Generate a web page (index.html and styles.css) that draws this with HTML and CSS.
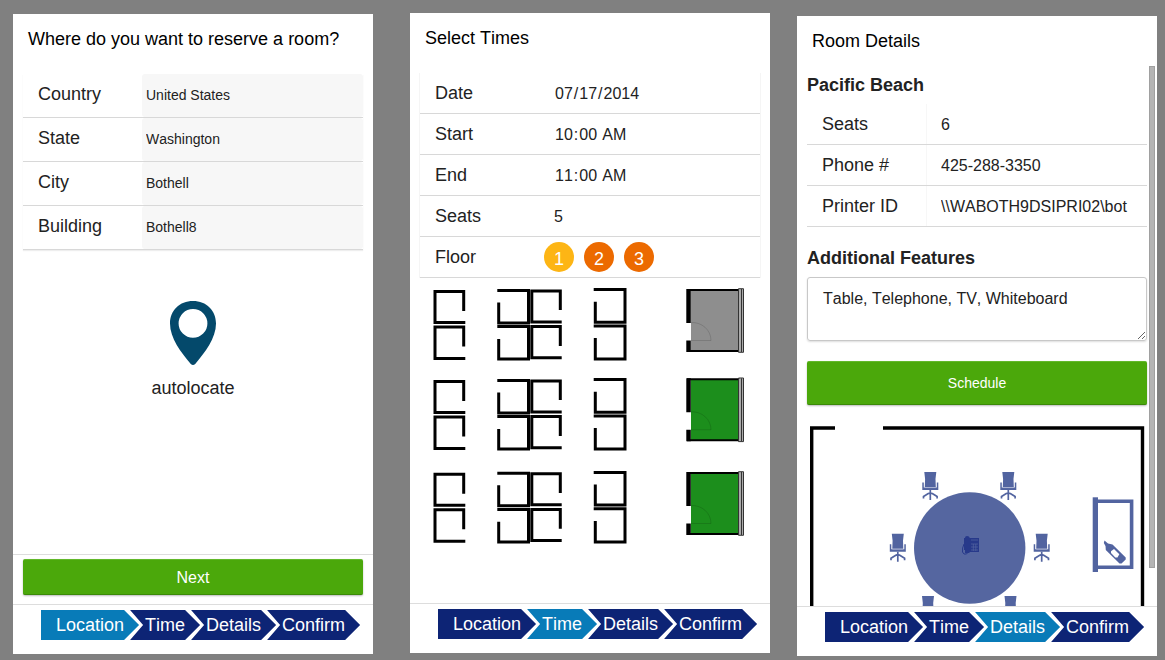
FILE: index.html
```html
<!DOCTYPE html>
<html lang="en-US">
<head>
<meta charset="utf-8">
<title>Reserve a room</title>
<link rel="stylesheet" href="styles.css">
</head>
<body>
<main class="screens">

<section class="phone phone-location">
  <h1 class="title">Where do you want to reserve a room?</h1>
  <div class="content">
    <form class="fields tall">
      <div class="row"><label for="country">Country</label><select id="country"><option>United States</option></select></div>
      <div class="row"><label for="state">State</label><select id="state"><option>Washington</option></select></div>
      <div class="row"><label for="city">City</label><select id="city"><option>Bothell</option></select></div>
      <div class="row"><label for="building">Building</label><select id="building"><option>Bothell8</option></select></div>
    </form>
    <button class="locate" type="button">
      <svg width="46" height="64" viewBox="0 0 46 64" aria-hidden="true">
        <path fill="#04496b" fill-rule="evenodd" d="M23 0C9.500 0 0 9.500 0 22.500C0 37 11 51.500 20.800 63Q23 65 25.200 63C35 51.500 46 37 46 22.500C46 9.500 36.500 0 23 0ZM23 8A14.400 14.400 0 1 1 23 36.800A14.400 14.400 0 1 1 23 8Z"/>
      </svg>
      autolocate
    </button>
  </div>
  <div class="actions"><button class="primary next" type="button">Next</button></div>
  <nav class="steps">
    <a class="step first active" href="#location">Location</a>
    <a class="step" href="#time">Time</a>
    <a class="step" href="#details">Details</a>
    <a class="step" href="#confirm">Confirm</a>
  </nav>
</section>

<section class="phone phone-time">
  <h1 class="title">Select Times</h1>
  <div class="content">
    <form class="fields">
      <div class="row"><label for="date">Date</label><input id="date" type="date" value="2014-07-17"></div>
      <div class="row"><label for="start">Start</label><input id="start" type="time" value="10:00"></div>
      <div class="row"><label for="end">End</label><input id="end" type="time" value="11:00"></div>
      <div class="row"><label for="seats">Seats</label><input id="seats" type="number" value="5"></div>
      <div class="row"><span class="label">Floor</span>
        <div class="floors">
          <button class="floor current" type="button">1</button>
          <button class="floor" type="button">2</button>
          <button class="floor" type="button">3</button>
        </div>
      </div>
    </form>
    <svg class="drawing" viewBox="420 278 340 270" role="img" aria-label="Floor map">
      <defs>
        <g id="desks" fill="none" stroke="#000" stroke-width="3">
          <path d="M463.700 311.500V292H435V323H465.300M463.700 347V327.500H435V359H465.300"/>
          <path d="M497.300 291H528.500V323.500H498.700V303M497.300 327.200H528.500V359.700H498.700V339.500"/>
          <path d="M560.300 310.700V291.500H531.800V322.500H561.700M560.300 346.500V327.200H531.800V358.300H561.700"/>
          <path d="M593.700 290.200H625V322.800H595.300V302.300M593.700 326.500H625V359.700H595.300V338.700"/>
        </g>
        <g id="room">
          <path d="M691 290.500H739V351H691Z"/>
          <path fill="none" stroke="#000" stroke-width="2" d="M687 290H740M687 351H740"/>
          <path fill="#000" d="M686.300 289H690.800V323H686.300ZM686.300 340.500H690.800V352H686.300Z"/>
          <path fill="none" stroke="#000" stroke-opacity=".13" d="M691 322.500C702 322 711 330 711 340.500H691"/>
          <path fill="#aaa" d="M738.500 289H743.500V352H738.500Z"/>
          <path fill="none" stroke="#333" d="M738.500 288.700H743.500V352.300H738.500ZM741.500 289V352"/>
        </g>
      </defs>
      <use href="#desks" y="-0.600"/>
      <use href="#desks" y="89.400"/>
      <use href="#desks" y="182.300"/>
      <use href="#room" fill="#8e8e8e"/>
      <use href="#room" y="89.300" fill="#1c8e1c"/>
      <use href="#room" y="183" fill="#1c8e1c"/>
    </svg>
  </div>
  <nav class="steps">
    <a class="step first" href="#location">Location</a>
    <a class="step active" href="#time">Time</a>
    <a class="step" href="#details">Details</a>
    <a class="step" href="#confirm">Confirm</a>
  </nav>
</section>

<section class="phone phone-details">
  <h1 class="title">Room Details</h1>
  <div class="viewport">
    <div class="content">
      <h2>Pacific Beach</h2>
      <form class="fields">
        <div class="row"><label for="capacity">Seats</label><input id="capacity" type="text" value="6" readonly></div>
        <div class="row"><label for="phone">Phone #</label><input id="phone" type="text" value="425-288-3350" readonly></div>
        <div class="row"><label for="printer">Printer ID</label><input id="printer" type="text" value="\\WABOTH9DSIPRI02\bot" readonly></div>
      </form>
      <h2 class="spaced"><label for="features">Additional Features</label></h2>
      <textarea id="features">Table, Telephone, TV, Whiteboard</textarea>
      <button class="primary schedule" type="button">Schedule</button>
      <svg class="drawing" viewBox="807 425 340 221" role="img" aria-label="Room plan">
        <defs>
          <g id="chair" fill="#5264a0" stroke="none">
            <path d="M-6 0H6L5.200 7L5.500 15H-5.500L-5.200 7Z"/>
            <path d="M-8 10.500H-6.500V15.500H6.500V10.500H8V18H-8Z"/>
            <path stroke="#a9b2d2" stroke-width=".6" d="M-5.500 15.600H5.500"/>
            <path fill="none" stroke="#5264a0" stroke-width="1.700" d="M0 18V28M-6.800 26.500V24.500L-2 21.500Q0 20.500 2 21.500L6.800 24.500V26.500"/>
          </g>
        </defs>
        <path fill="none" stroke="#000" stroke-width="3.400" d="M835 428H811.700V643.500H1142.500V428H883"/>
        <use href="#chair" x="930.300" y="472"/>
        <use href="#chair" x="1008.300" y="472"/>
        <use href="#chair" x="897.800" y="533.700"/>
        <use href="#chair" x="1041.700" y="533.700"/>
        <use href="#chair" x="928" y="596"/>
        <use href="#chair" x="1010.500" y="596"/>
        <circle cx="969.700" cy="548" r="55.700" fill="#5566a0"/>
        <g fill="#27398a">
          <path d="M965 537.500Q965 536 967 536Q969.500 536 969.500 537.500V553H965Z"/>
          <path d="M969 538H979V552H969Z"/>
          <path fill="none" stroke="#27398a" d="M964.500 538V550M964 544Q962 548 962.500 552Q963.500 555 966.500 554Q968 553 968 551"/>
          <path fill="none" stroke="#5566a0" stroke-width=".7" d="M971 540H978M971 544H978M971 547H978M971 550H978M973.300 544V551M975.800 544V551"/>
        </g>
        <path fill="#5264a0" d="M1092.700 497.300H1098V572H1092.700Z"/>
        <path fill="none" stroke="#5264a0" stroke-width="3.600" d="M1097 501.300H1131.600V567.300H1097"/>
        <path fill="#5264a0" d="M1104.500 540.500L1108 543.500L1112.500 544.500L1125.700 557.500V559.500L1121.500 563.500H1119.500L1105.800 550L1105.500 546L1103.800 543Z"/>
        <path fill="#fff" d="M1114 549L1119.300 554.200L1117.500 557.500L1115.300 557.500L1111 553V551.200Z"/>
      </svg>
    </div>
    <div class="thumb"></div>
  </div>
  <nav class="steps">
    <a class="step first" href="#location">Location</a>
    <a class="step" href="#time">Time</a>
    <a class="step active" href="#details">Details</a>
    <a class="step" href="#confirm">Confirm</a>
  </nav>
</section>

</main>
</body>
</html>
```
FILE: styles.css
```css
* { box-sizing: border-box; }

body {
  margin: 0;
  background: #808080;
  color: #222;
  font: 18px/20px "Liberation Sans", Arial, sans-serif;
  font-kerning: none;
}

button, input, select, textarea {
  margin: 0;
  border: 0;
  background: none;
  color: inherit;
  font: inherit;
  font-kerning: none;
}

.screens {
  display: flex;
  gap: 27px;
  height: 100vh;
  min-height: 600px;
  padding: 13px 8px 4px 13px;
}

.phone {
  display: flex;
  flex: 1 1 0;
  flex-direction: column;
  min-width: 0;
  background: #fff;
}

.phone-location { margin: 1px 10px 2px 0; }
.phone-time { margin-bottom: 3px; }
.phone-details { margin-top: 3px; }

.title {
  margin: 0;
  padding: 15px;
  color: #000;
  font-size: 18px;
  font-weight: normal;
}

.content {
  flex: 1;
  min-height: 0;
  padding: 10px;
}

h2 {
  margin: 0 0 10px;
  font-size: 18px;
  line-height: 18px;
}

h2.spaced { margin-top: 22px; }

.row {
  display: grid;
  grid-template-columns: 35% 1fr;
  height: 41px;
  border-bottom: 1px solid #d8d8d8;
}

.row label, .row .label {
  padding: 10px 15px;
}

.row input {
  width: 100%;
  min-width: 0;
  padding: 2px 15px 0;
  font-size: 16px;
  outline: 0;
  appearance: none;
}

.phone-time .fields { border: solid #f5f5f5; border-width: 0 1px; margin: 0 -1px; }
.phone-details .row input { padding-left: 14px; border-left: 1px solid #f7f7f7; }

input::-webkit-calendar-picker-indicator,
input::-webkit-inner-spin-button { display: none; }

.tall { box-shadow: 0 1px 1px #eee; }
.tall .row { height: 44px; }

.tall select {
  padding: 0 4px 2px;
  border-radius: 3px;
  background: #f7f7f7;
  font-size: 14px;
  appearance: none;
}

.locate {
  display: flex;
  flex-direction: column;
  align-items: center;
  gap: 13px;
  margin: 51px auto 0;
  padding: 0;
}

.actions {
  padding: 4px 10px 9px;
  border-top: 1px solid #ddd;
}

.primary {
  display: block;
  width: 100%;
  border-top: 1px solid #62b82a;
  border-bottom: 1px solid #3b8a08;
  border-radius: 2px;
  background: #4ba80b;
  box-shadow: 0 1px 2px #bbb;
  color: #fff;
}

.next { height: 36px; padding-top: 2px; font-size: 16px; }
.schedule { height: 44px; margin: 20px 0; font-size: 14px; }

.floors {
  display: flex;
  gap: 10px;
  padding: 5px;
}

.floor {
  width: 30px;
  height: 30px;
  padding: 4px 0 0;
  border-radius: 50%;
  background: #ec6a00;
  color: #fff;
}

.floor.current { background: #fdb515; }

.drawing {
  display: block;
  width: 100%;
}

.viewport {
  position: relative;
  display: flex;
  flex: 1;
  min-height: 0;
}

.viewport .content {
  overflow-y: auto;
  scrollbar-width: none;
}

.thumb {
  position: absolute;
  top: 0;
  right: 2px;
  width: 6px;
  height: 93%;
  border: 1px solid #a0a0a0;
  background: #b4b4b4;
}

textarea {
  display: block;
  width: 100%;
  height: 64px;
  padding: 11px 15px;
  border: 1px solid #c8c8c8;
  border-radius: 3px;
  box-shadow: 0 1px 2px #ddd;
  font-size: 16px;
}

.steps {
  display: flex;
  height: 50px;
  padding: 5px 0 14px 28px;
  border-top: 1px solid #ddd;
}

.step {
  margin-left: -9px;
  padding: 0 15px;
  background: #0d2475;
  clip-path: polygon(0 0, calc(100% - 15px) 0, 100% 50%, calc(100% - 15px) 100%, 0 100%, 13px 50%);
  color: #fff;
  line-height: 30px;
  text-decoration: none;
}

.step.first {
  margin-left: 0;
  clip-path: polygon(0 0, calc(100% - 15px) 0, 100% 50%, calc(100% - 15px) 100%, 0 100%);
}

.step.active { background: #087bb8; }
```
